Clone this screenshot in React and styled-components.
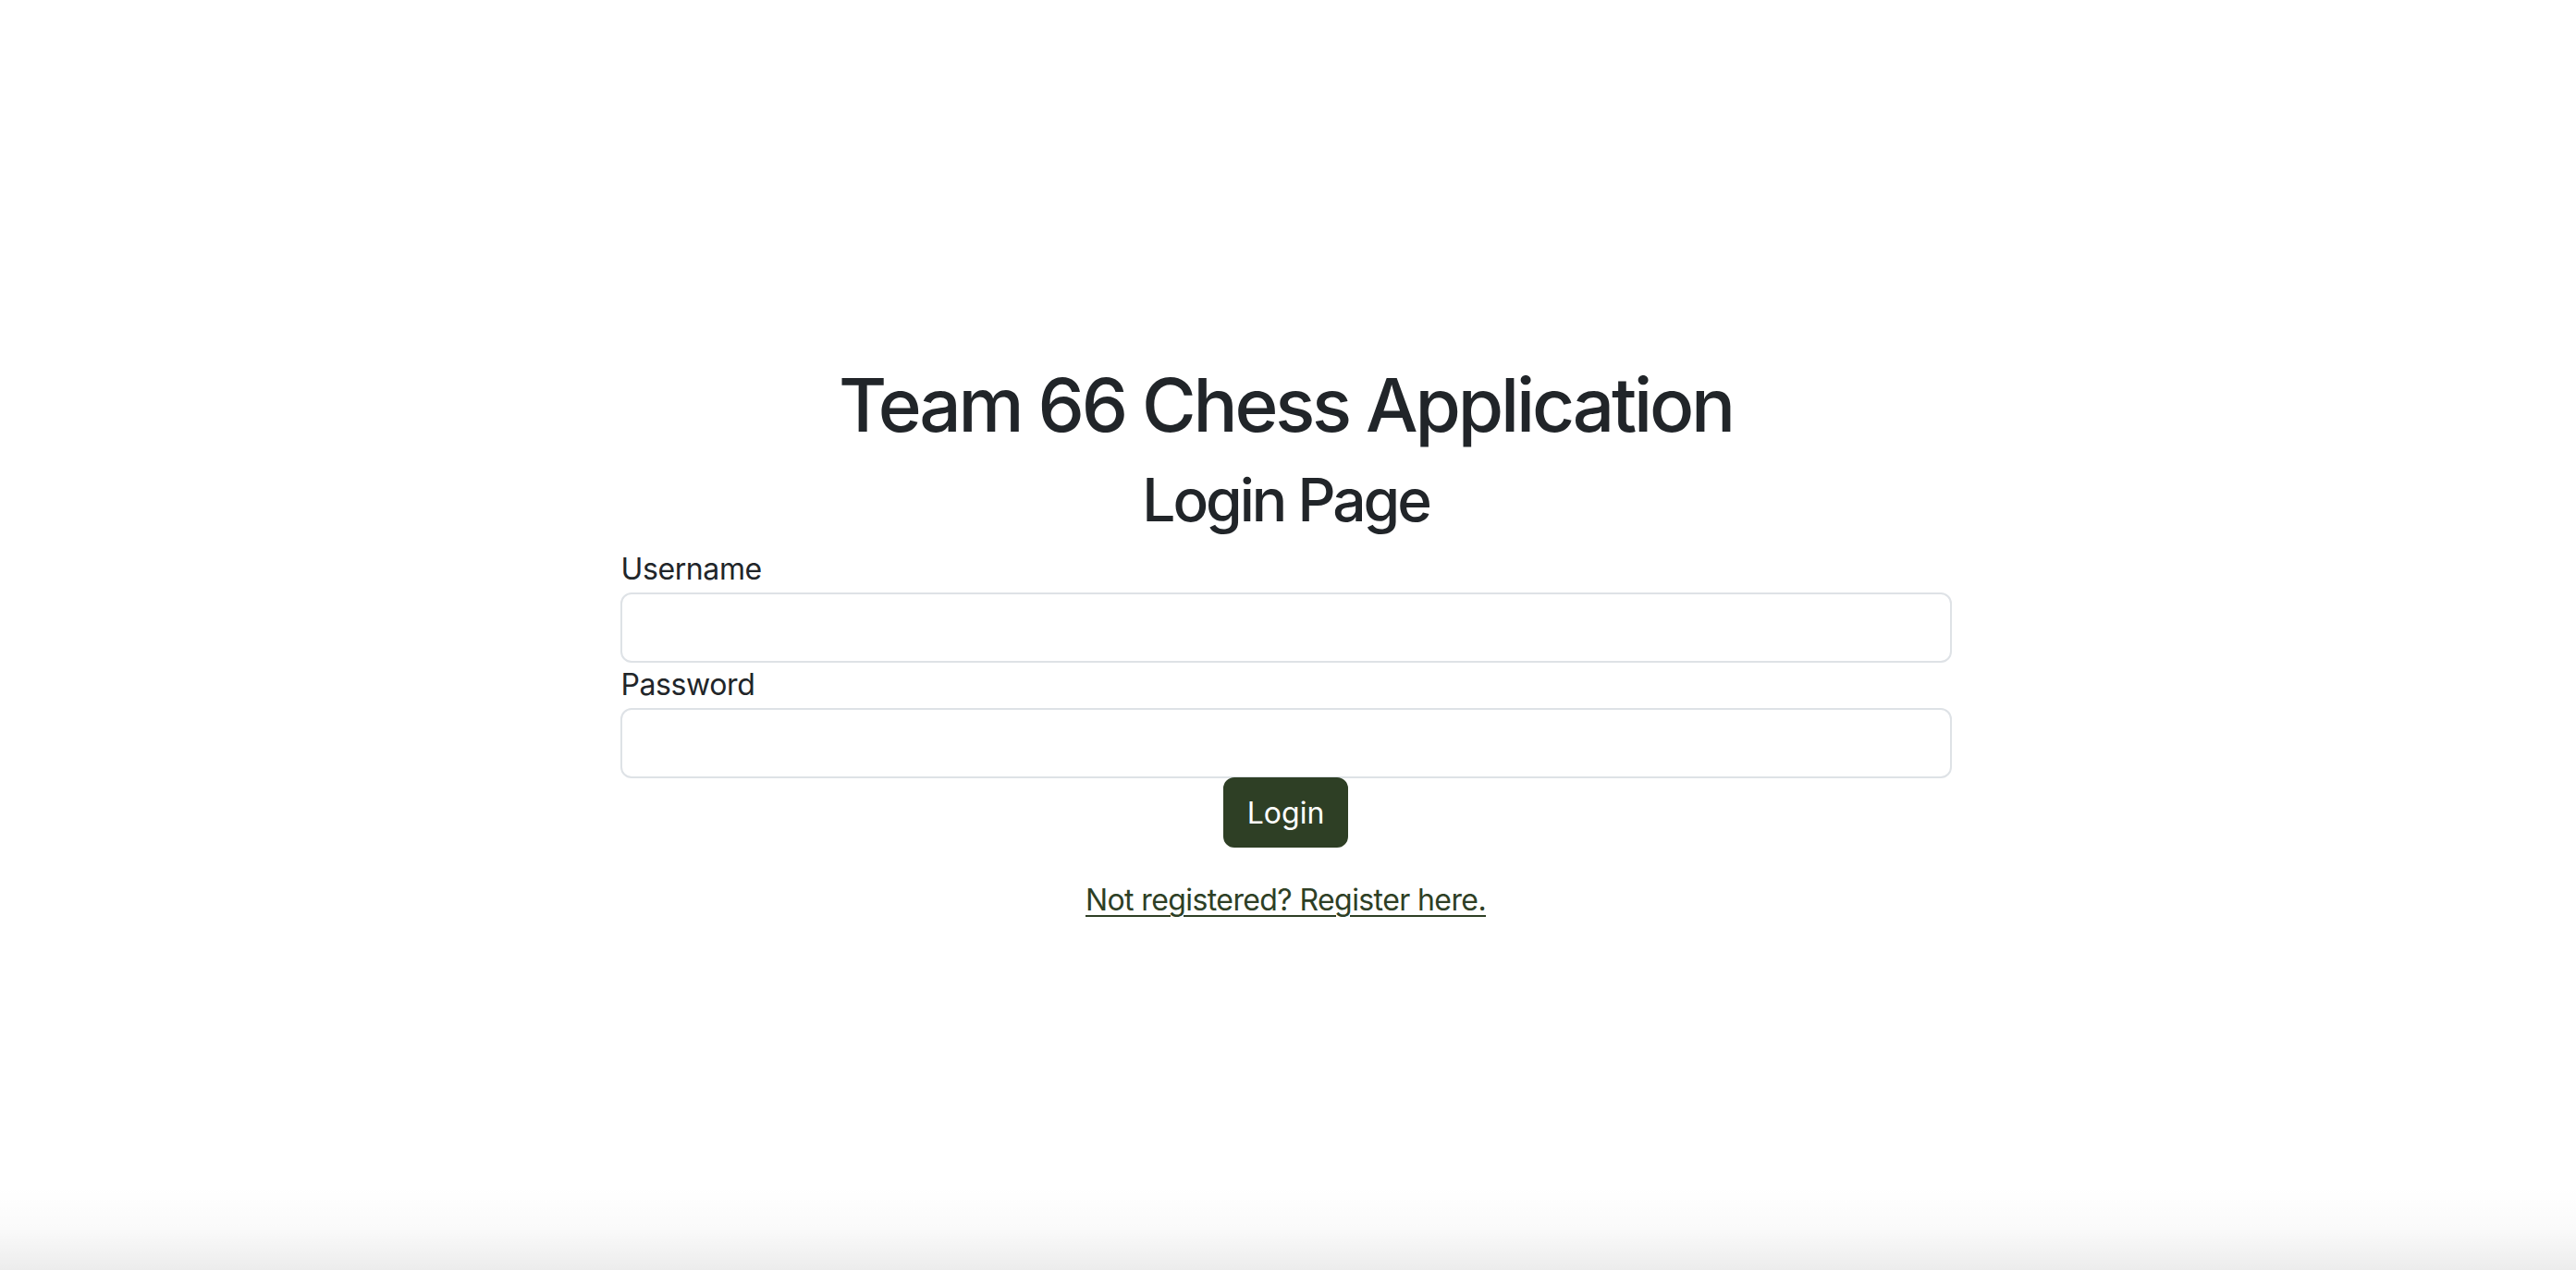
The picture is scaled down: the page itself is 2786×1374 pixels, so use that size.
import React from 'react'
import styled, {createGlobalStyle} from "styled-components"

const GlobalStyle = createGlobalStyle`
    * { box-sizing: border-box; }
    html, body {
        margin: 0;
        padding: 0;
        background: #ffffff;
        font-family: Inter, "Liberation Sans", sans-serif;
        color: #212529;
    }
`

const Page = styled.div`
    min-height: 100vh;
    display: flex;
    flex-direction: column;
`

const Main = styled.main`
    flex: 1;
    display: flex;
    justify-content: center;
    padding: 390px 5px 0 0;
`

const Wrapper = styled.div`
    width: 1440px;
    display: flex;
    flex-direction: column;
    align-items: stretch;
`

const Title = styled.h1`
    margin: 0 0 16px;
    font-size: 80px;
    line-height: 96px;
    font-weight: 500;
    letter-spacing: -3.2px;
    text-align: center;
`

const SubTitle = styled.h2`
    margin: 0 0 18px;
    font-size: 64px;
    line-height: 77px;
    font-weight: 500;
    letter-spacing: -3px;
    text-align: center;
`

const Label = styled.label`
    display: block;
    font-size: 32px;
    line-height: 38px;
    letter-spacing: -0.4px;
    margin: ${props => props.first ? "0" : "5px"} 0 6px 1px;
`

const Input = styled.input`
    display: block;
    width: 100%;
    height: 76px;
    padding: 12px 24px;
    font-size: 32px;
    font-family: inherit;
    border: 2px solid #dee2e6;
    border-radius: 12px;
    background: #fff;
    outline: none;
`

const ButtonRow = styled.div`
    display: flex;
    justify-content: center;
    margin-top: -1px;
`

const Button = styled.button`
    height: 76px;
    padding: 0 24px;
    font-size: 32px;
    font-family: inherit;
    color: #ffffff;
    background-color: #2e3f25;
    border: 2px solid #2e3f25;
    border-radius: 12px;
    cursor: pointer;
`

const LinkText = styled.p`
    margin: 33px 0 0;
    text-align: center;
    font-size: 32px;
    line-height: 48px;
    letter-spacing: -0.6px;
`

const Link = styled.a`
    color: #2e3f25;
    text-decoration: underline;
    text-underline-offset: 5px;
    text-decoration-thickness: 2px;
`

const Shade = styled.div`
    height: 90px;
    background: linear-gradient(to bottom, rgba(0,0,0,0) 0%, rgba(0,0,0,0.02) 50%, rgba(0,0,0,0.075) 100%);
`

const App = () => {
    return (
        <Page>
            <GlobalStyle/>
            <Main>
                <Wrapper>
                    <Title>Team 66 Chess Application</Title>
                    <SubTitle>Login Page</SubTitle>
                    <Label first htmlFor="username">Username</Label>
                    <Input id="username" type="text"/>
                    <Label htmlFor="password">Password</Label>
                    <Input id="password" type="password"/>
                    <ButtonRow>
                        <Button>Login</Button>
                    </ButtonRow>
                    <LinkText>
                        <Link href="#register">Not registered? Register here.</Link>
                    </LinkText>
                </Wrapper>
            </Main>
            <Shade/>
        </Page>
    )
}

export default App
